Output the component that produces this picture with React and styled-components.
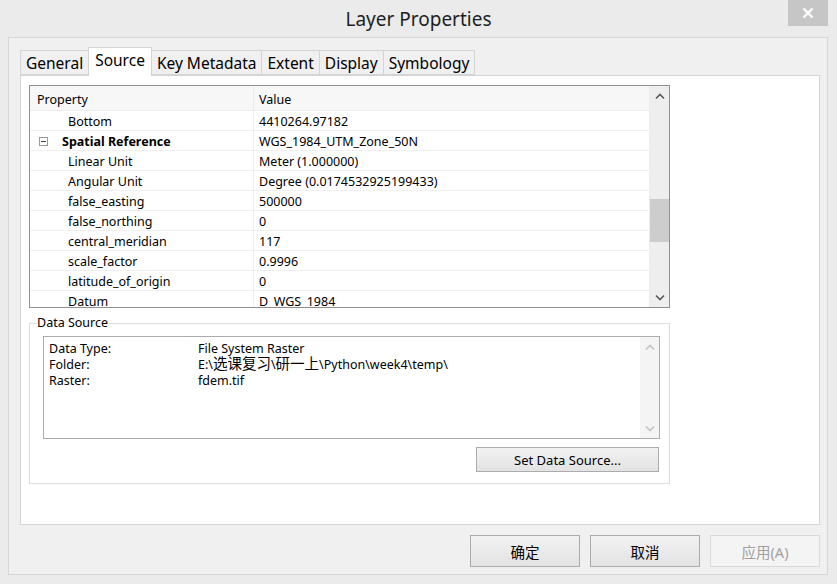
import React from 'react';
import styled, { createGlobalStyle } from 'styled-components';

const UI_FONT = '"Noto Sans", "Noto Sans CJK SC", sans-serif';

const GlobalStyle = createGlobalStyle`
  html, body {
    margin: 0;
    padding: 0;
  }
  body {
    background: #ebebeb;
    font-family: ${UI_FONT};
    color: #000;
  }
`;

const tabs = ['General', 'Source', 'Key Metadata', 'Extent', 'Display', 'Symbology'];

const properties = [
  { name: 'Bottom', value: '4410264.97182' },
  { name: 'Spatial Reference', value: 'WGS_1984_UTM_Zone_50N', group: true },
  { name: 'Linear Unit', value: 'Meter (1.000000)' },
  { name: 'Angular Unit', value: 'Degree (0.0174532925199433)' },
  { name: 'false_easting', value: '500000' },
  { name: 'false_northing', value: '0' },
  { name: 'central_meridian', value: '117' },
  { name: 'scale_factor', value: '0.9996' },
  { name: 'latitude_of_origin', value: '0' },
  { name: 'Datum', value: 'D_WGS_1984' },
];

// CJK runs are drawn a little larger, as the dialog's fallback font does
const renderMixed = (text) =>
  text.split(/([\u4e00-\u9fff]+)/).map((part, i) =>
    /[\u4e00-\u9fff]/.test(part) ? <Cjk key={i}>{part}</Cjk> : part
  );

const sourceInfo = [
  ['Data Type:', 'File System Raster'],
  ['Folder:', 'E:\\选课复习\\研一上\\Python\\week4\\temp\\'],
  ['Raster:', 'fdem.tif'],
];

const Chevron = ({ up, color }) => (
  <svg width="10" height="7" viewBox="0 0 10 7">
    <polyline
      points={up ? '1,5.5 5,1.5 9,5.5' : '1,1.5 5,5.5 9,1.5'}
      fill="none"
      stroke={color}
      strokeWidth="1.6"
    />
  </svg>
);

const App = () => (
  <>
    <GlobalStyle />
    <Window>
      <TitleBar>
        <span />
        <Title>Layer Properties</Title>
        <CloseButton>
          <svg width="12" height="12" viewBox="0 0 12 12">
            <path d="M1.5 1.5 L10.5 10.5 M10.5 1.5 L1.5 10.5" stroke="#fff" strokeWidth="2.4" />
          </svg>
        </CloseButton>
      </TitleBar>

      <Client>
        <TabStrip>
          {tabs.map((t) => (
            <Tab key={t} $active={t === 'Source'}>
              {t}
            </Tab>
          ))}
        </TabStrip>

        <TabPage>
          <PropertyGrid>
            <GridBody>
              <HeaderRow>
                <HeaderCell $first>Property</HeaderCell>
                <HeaderCell>Value</HeaderCell>
              </HeaderRow>
              {properties.map((p) => (
                <Row key={p.name}>
                  <NameCell $group={p.group}>
                    {p.group && <Expander />}
                    {p.name}
                  </NameCell>
                  <ValueCell>{p.value}</ValueCell>
                </Row>
              ))}
            </GridBody>
            <ScrollBar>
              <ArrowButton>
                <Chevron up color="#5a5a5a" />
              </ArrowButton>
              <Track>
                <Thumb style={{ marginTop: 93, height: 43 }} />
              </Track>
              <ArrowButton>
                <Chevron color="#5a5a5a" />
              </ArrowButton>
            </ScrollBar>
          </PropertyGrid>

          <GroupBox>
            <Legend>Data Source</Legend>
            <TextBox>
              <InfoList>
                {sourceInfo.map(([label, value]) => (
                  <React.Fragment key={label}>
                    <InfoCell>{label}</InfoCell>
                    <InfoCell>{renderMixed(value)}</InfoCell>
                  </React.Fragment>
                ))}
              </InfoList>
              <ScrollBar $light>
                <ArrowButton>
                  <Chevron up color="#c4c4c4" />
                </ArrowButton>
                <Track />
                <ArrowButton>
                  <Chevron color="#c4c4c4" />
                </ArrowButton>
              </ScrollBar>
            </TextBox>
            <SetSourceButton>Set Data Source...</SetSourceButton>
          </GroupBox>
        </TabPage>

        <ButtonRow>
          <DialogButton>确定</DialogButton>
          <DialogButton>取消</DialogButton>
          <DialogButton disabled>应用(A)</DialogButton>
        </ButtonRow>
      </Client>
    </Window>
  </>
);

const Window = styled.div`
  width: 837px;
  height: 584px;
  display: flex;
  flex-direction: column;
  background: #ebebeb;
  box-sizing: border-box;
`;

const TitleBar = styled.div`
  height: 37px;
  display: grid;
  grid-template-columns: 1fr auto 1fr;
  align-items: start;
`;

const Title = styled.div`
  font-size: 19px;
  line-height: 38px;
  color: #1e1e1e;
`;

const CloseButton = styled.div`
  justify-self: end;
  margin-right: 9px;
  width: 40px;
  height: 26px;
  background: #c6c6c6;
  display: flex;
  align-items: center;
  justify-content: center;
`;

const Client = styled.div`
  margin: 0 9px 9px 8px;
  flex: 1;
  border: 1px solid #d6d6d6;
  background: #f0f0f0;
  display: flex;
  flex-direction: column;
  padding: 10px 7px 7px 11px;
`;

const TabStrip = styled.div`
  display: flex;
  align-items: flex-end;
  height: 27px;
  position: relative;
  z-index: 1;
`;

const Tab = styled.div`
  box-sizing: border-box;
  height: ${(p) => (p.$active ? '29px' : '25px')};
  margin-bottom: ${(p) => (p.$active ? '-1px' : '0')};
  padding: ${(p) => (p.$active ? '0 6px 3px' : '0 5px')};
  margin-right: -1px;
  border: 1px solid #d4d4d4;
  border-bottom: ${(p) => (p.$active ? 'none' : '1px solid #d4d4d4')};
  background: ${(p) => (p.$active ? '#fff' : '#f0f0f0')};
  font-size: 15.5px;
  line-height: 24px;
  white-space: nowrap;
`;

const TabPage = styled.div`
  height: 450px;
  box-sizing: border-box;
  background: #fff;
  border: 1px solid #d4d4d4;
  padding: 9px 0 0 8px;
  display: flex;
  flex-direction: column;
`;

const PropertyGrid = styled.div`
  width: 641px;
  height: 223px;
  box-sizing: border-box;
  border: 1px solid #8f8f8f;
  display: flex;
  overflow: hidden;
  font-size: 12.5px;
`;

const GridBody = styled.div`
  flex: 1;
  overflow: hidden;
  border-right: 1px solid #ececec;
`;

const HeaderRow = styled.div`
  display: grid;
  grid-template-columns: 224px 1fr;
  height: 24px;
  background: #f7f7f7;
  border-bottom: 1px solid #ececec;
`;

const HeaderCell = styled.div`
  line-height: 24px;
  padding-top: 2px;
  padding-left: ${(p) => (p.$first ? '7px' : '5px')};
  border-right: ${(p) => (p.$first ? '1px solid #ececec' : 'none')};
`;

const Row = styled.div`
  display: grid;
  grid-template-columns: 224px 1fr;
  height: 19px;
  border-bottom: 1px solid #f0f0f0;
`;

const NameCell = styled.div`
  display: flex;
  align-items: center;
  padding-top: 2px;
  padding-left: ${(p) => (p.$group ? '9px' : '38px')};
  font-weight: ${(p) => (p.$group ? 700 : 400)};
  border-right: 1px solid #f0f0f0;
  white-space: nowrap;
`;

const ValueCell = styled.div`
  display: flex;
  align-items: center;
  padding-top: 2px;
  padding-left: 5px;
  white-space: nowrap;
`;

const Expander = styled.span`
  width: 9px;
  height: 9px;
  box-sizing: border-box;
  border: 1px solid #9a9a9a;
  margin-right: 14px;
  position: relative;
  &::after {
    content: '';
    position: absolute;
    left: 1px;
    right: 1px;
    top: 3px;
    height: 1px;
    background: #444;
  }
`;

const ScrollBar = styled.div`
  width: 19px;
  flex: none;
  display: flex;
  flex-direction: column;
  background: ${(p) => (p.$light ? '#f4f4f4' : '#eeeeee')};
`;

const ArrowButton = styled.div`
  height: 20px;
  display: flex;
  align-items: center;
  justify-content: center;
`;

const Track = styled.div`
  flex: 1;
`;

const Thumb = styled.div`
  background: #cdcdcd;
`;

const GroupBox = styled.fieldset`
  width: 641px;
  box-sizing: border-box;
  margin: 7px 0 0;
  padding: 5px 9px 11px 13px;
  border: 1px solid #dcdcdc;
  display: flex;
  flex-direction: column;
  min-width: 0;
`;

const Legend = styled.legend`
  font-size: 12.5px;
  line-height: 16px;
  padding: 0 1px;
  margin-left: -7px;
`;

const TextBox = styled.div`
  height: 103px;
  box-sizing: border-box;
  border: 1px solid #acacac;
  display: flex;
`;

const InfoList = styled.div`
  flex: 1;
  display: grid;
  grid-template-columns: 149px 1fr;
  grid-auto-rows: 16px;
  align-content: start;
  padding: 4px 0 0 5px;
  font-size: 12.5px;
  line-height: 16px;
`;

const InfoCell = styled.div`
  height: 16px;
  line-height: 16px;
  white-space: nowrap;
`;

const Cjk = styled.span`
  font-family: "Noto Sans CJK SC", sans-serif;
  font-size: 14.5px;
  line-height: 0;
`;

const SetSourceButton = styled.button`
  align-self: flex-end;
  width: 183px;
  height: 25px;
  margin: 8px 1px 0 0;
  border: 1px solid #acacac;
  background: linear-gradient(#f2f2f2, #e3e3e3);
  font-family: ${UI_FONT};
  font-size: 13px;
  color: #000;
  padding: 0;
`;

const ButtonRow = styled.div`
  display: flex;
  justify-content: flex-end;
  gap: 10px;
  margin-top: 10px;
`;

const DialogButton = styled.button`
  width: 110px;
  height: 32px;
  padding: 0;
  border: 1px solid ${(p) => (p.disabled ? '#d9d9d9' : '#acacac')};
  background: ${(p) => (p.disabled ? '#f4f4f4' : 'linear-gradient(#f2f2f2, #e3e3e3)')};
  color: ${(p) => (p.disabled ? '#a0a0a0' : '#000')};
  font-family: ${UI_FONT};
  font-size: 14.5px;
`;

export default App;
